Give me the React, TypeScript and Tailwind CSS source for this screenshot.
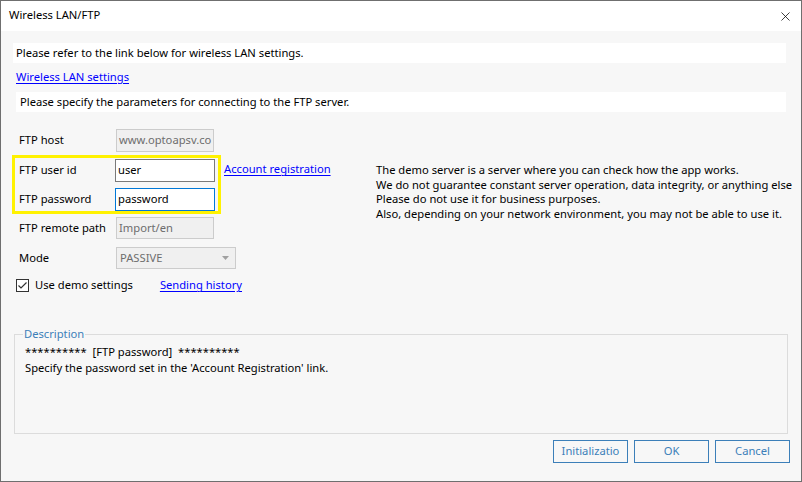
import { X } from "lucide-react";

const font = { fontFamily: '"Noto Sans", "Open Sans", sans-serif' };

const Link = ({ children }: { children: React.ReactNode }) => (
  <span className="cursor-pointer text-[#0000ff] underline underline-offset-[2px]">{children}</span>
);

const Field = ({ value, disabled, focused, w = "w-[98px]" }: { value: string; disabled?: boolean; focused?: boolean; w?: string }) => (
  <div
    className={`${w} flex h-full items-center overflow-hidden whitespace-nowrap border px-[2px] ${
      disabled
        ? "border-[#cccccc] bg-[#f0f0f0] text-[#6d6d6d]"
        : focused
          ? "border-[#0078d7] bg-white text-black"
          : "border-[#7a7a7a] bg-white text-black"
    }`}
  >
    {value}
  </div>
);

export default function App() {
  return (
    <div className="h-[482px] w-[802px] overflow-hidden bg-white text-[11.2px] text-black" style={font}>
      <div className="flex h-full flex-col border border-[#6f6f6f]">
        {/* title bar */}
        <div className="flex h-[30px] shrink-0 items-center justify-between bg-white pl-[8px] pr-[8px]">
          <span className="mt-[-1px]">Wireless LAN/FTP</span>
          <X className="h-[15px] w-[15px] text-black" strokeWidth={1.2} />
        </div>

        {/* body */}
        <div className="flex flex-1 flex-col whitespace-nowrap bg-[#f7f7f7]">
          <div className="ml-[12px] mt-[12px] flex h-[20px] w-[773px] items-center bg-white pl-[3px]">
            Please refer to the link below for wireless LAN settings.
          </div>
          <div className="ml-[15px] mt-[4px] flex h-[20px] items-center">
            <Link>Wireless LAN settings</Link>
          </div>
          <div className="ml-[15px] mt-[5px] flex h-[20px] w-[770px] items-center bg-white pl-[4px]">
            Please specify the parameters for connecting to the FTP server.
          </div>

          <div className="mt-[17px] flex">
            {/* form column */}
            <div className="flex w-[375px] flex-col">
              <div className="flex h-[23px] items-center pl-[18px]">
                <span className="w-[97px]">FTP host</span>
                <Field value="www.optoapsv.co" disabled />
              </div>

              <div className="mt-[3px] flex">
                <div className="ml-[11px] flex w-[209px] flex-col gap-[6px] border-[3px] border-[#fff200] pb-0 pl-[4px] pt-[1px]">
                  <div className="flex h-[23px] items-center">
                    <span className="w-[96px]">FTP user id</span>
                    <Field value="user" w="w-[100px]" />
                  </div>
                  <div className="flex h-[23px] items-center">
                    <span className="w-[96px]">FTP password</span>
                    <Field value="password" focused w="w-[100px]" />
                  </div>
                </div>
                <div className="ml-[3px] mt-[3px] flex h-[23px] items-center">
                  <Link>Account registration</Link>
                </div>
              </div>

              <div className="mt-[3px] flex h-[22px] items-center pl-[18px]">
                <span className="w-[97px]">FTP remote path</span>
                <Field value="Import/en" disabled />
              </div>

              <div className="mt-[8px] flex h-[22px] items-center pl-[18px]">
                <span className="w-[97px]">Mode</span>
                <div className="flex h-full w-[120px] items-center justify-between border border-[#cccccc] bg-[#f0f0f0] pl-[3px] pr-[6px] text-[#6d6d6d]">
                  <span>PASSIVE</span>
                  <svg width="7" height="4" viewBox="0 0 7 4">
                    <path d="M0 0 L7 0 L3.5 4 Z" fill="#a0a0a0" />
                  </svg>
                </div>
              </div>

              <div className="mt-[9px] flex h-[15px] items-center pl-[15px]">
                <svg width="13" height="13" viewBox="0 0 13 13" className="shrink-0">
                  <rect x="0.5" y="0.5" width="12" height="12" fill="white" stroke="#333333" />
                  <path d="M2.5 6.5 L5 9 L10.5 3.5" fill="none" stroke="#333333" strokeWidth="1.2" />
                </svg>
                <span className="ml-[6px]">Use demo settings</span>
                <span className="ml-[27px]">
                  <Link>Sending history</Link>
                </span>
              </div>
            </div>

            {/* notes */}
            <div className="mt-[34px] flex flex-col leading-[14.6px]">
              <span>The demo server is a server where you can check how the app works.</span>
              <span>We do not guarantee constant server operation, data integrity, or anything else</span>
              <span>Please do not use it for business purposes.</span>
              <span>Also, depending on your network environment, you may not be able to use it.</span>
            </div>
          </div>

          <fieldset className="ml-[13px] mt-[33px] h-[108px] w-[774px] border border-[#dcdcdc] px-[10px]">
            <legend className="ml-[-2px] px-[1px] text-[#3c7fb9]">Description</legend>
            <div className="mt-[1px] flex flex-col leading-[16px]">
              <span>**********&nbsp; [FTP password]&nbsp; **********</span>
              <span>Specify the password set in the 'Account Registration' link.</span>
            </div>
          </fieldset>

          <div className="mr-[11px] mt-[6px] flex justify-end gap-[6px]">
            {["Initializatio", "OK", "Cancel"].map((b) => (
              <div
                key={b}
                className="flex h-[23px] w-[75px] items-center justify-center border border-[#3c7fb9] bg-[#f7f7f7] text-[#3c7fb9]"
              >
                {b}
              </div>
            ))}
          </div>
        </div>
      </div>
    </div>
  );
}
